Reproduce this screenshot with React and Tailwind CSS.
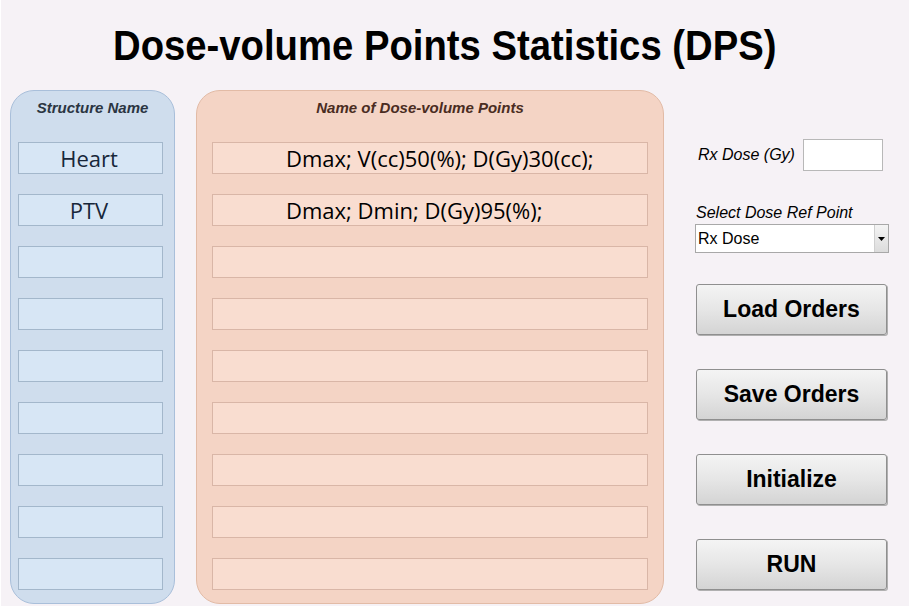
import React from 'react';

const structures = ['Heart', 'PTV', '', '', '', '', '', '', ''];
const points = ['Dmax; V(cc)50(%); D(Gy)30(cc);', 'Dmax; Dmin; D(Gy)95(%);', '', '', '', '', '', '', ''];

const App = () => {
  const btn =
    'w-[191px] h-[51px] rounded-[3px] border border-[#8f8f8f] bg-gradient-to-b from-[#f4f4f4] via-[#e6e6e6] to-[#d4d4d4] shadow-[1px_1px_0_#b0b0b0] text-[23px] font-bold text-black font-["Liberation_Sans",Arial,sans-serif] flex items-center justify-center';

  return (
    <div className="w-[909px] h-[612px] bg-white overflow-hidden">
      <div className="h-[606px] bg-[#f6f2f6] ml-[1px]">
        {/* Title */}
        <div className="h-[90px] flex items-center justify-center pr-[20px]">
          <h1 className="text-[43px] font-bold text-black font-['Liberation_Sans',Arial,sans-serif] scale-x-[0.89] whitespace-nowrap leading-none">
            Dose-volume Points Statistics (DPS)
          </h1>
        </div>

        <div className="flex pl-[9px]">
          {/* Structure names */}
          <div className="w-[165px] h-[514px] rounded-[24px] bg-[#cfdded] border border-[#a9bfda] flex flex-col">
            <div className="h-[28px] flex items-end justify-center text-[15px] italic font-bold text-[#2b3542] font-['Liberation_Sans',Arial,sans-serif]">
              Structure Name
            </div>
            <div className="mt-[23px] ml-[7px] flex flex-col gap-[20px]">
              {structures.map((s, i) => (
                <div
                  key={i}
                  className="w-[145px] h-[32px] bg-[#d7e6f5] border border-[#a3b7cb] flex items-center justify-center pr-[3px] text-[22px] text-[#17273a] font-['Open_Sans',sans-serif]"
                >
                  {s}
                </div>
              ))}
            </div>
          </div>

          {/* Dose-volume points */}
          <div className="ml-[21px] w-[468px] h-[514px] rounded-[24px] bg-[#f4d4c5] border border-[#e2bba6] flex flex-col items-center">
            <div className="h-[28px] mr-[20px] flex items-end text-[15px] italic font-bold text-[#4a2c22] font-['Liberation_Sans',Arial,sans-serif]">
              Name of Dose-volume Points
            </div>
            <div className="mt-[23px] flex flex-col gap-[20px]">
              {points.map((p, i) => (
                <div
                  key={i}
                  className="w-[436px] h-[32px] bg-[#f9ddd0] border border-[#d9b6a7] flex items-center pl-[73px] text-[22px] text-black font-['Open_Sans',sans-serif] whitespace-nowrap"
                >
                  {p}
                </div>
              ))}
            </div>
          </div>

          {/* Controls */}
          <div className="ml-[31px] w-[194px] flex flex-col">
            <div className="mt-[49px] flex items-center">
              <span className="ml-[3px] text-[16px] italic text-black font-['Liberation_Sans',Arial,sans-serif]">Rx Dose (Gy)</span>
              <div className="ml-[8px] w-[80px] h-[32px] bg-white border border-[#b8b8b8]" />
            </div>
            <div className="mt-[32px] ml-[1px] text-[16px] italic text-black font-['Liberation_Sans',Arial,sans-serif] leading-[19px]">
              Select Dose Ref Point
            </div>
            <div className="mt-[2px] w-[194px] h-[29px] bg-white border border-[#a8a8a8] flex items-center">
              <span className="flex-1 pl-[2px] text-[16px] text-black font-['Liberation_Sans',Arial,sans-serif]">Rx Dose</span>
              <div className="w-[14px] h-full bg-gradient-to-b from-[#f4f4f4] to-[#dcdcdc] border-l border-[#d0d0d0] flex items-center justify-center">
                <svg width="7" height="4" viewBox="0 0 7 4"><path d="M0 0h7L3.5 4z" fill="#000" /></svg>
              </div>
            </div>
            <div className="mt-[31px] flex flex-col gap-[34px] ml-[1px]">
              <div className={btn}>Load Orders</div>
              <div className={btn}>Save Orders</div>
              <div className={btn}>Initialize</div>
              <div className={btn}>RUN</div>
            </div>
          </div>
        </div>
      </div>
    </div>
  );
};

export default App;
